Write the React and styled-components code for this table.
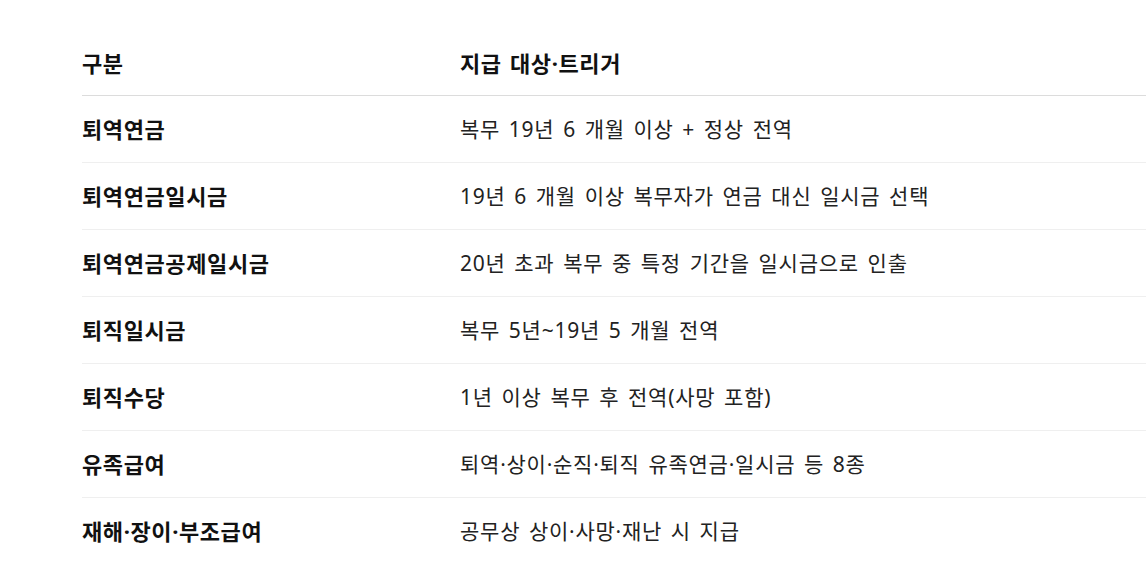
import React from 'react'
import styled, { createGlobalStyle } from 'styled-components'

const GlobalStyle = createGlobalStyle`
  html, body {
    margin: 0;
    padding: 0;
    background: #fff;
    overflow: hidden;
  }

  body {
    font-family: 'Noto Sans', 'Noto Sans CJK KR', sans-serif;
    color: #222;
  }
`

const Wrapper = styled.div`
  padding: 31px 0 0 82px;
`

const Table = styled.table`
  width: 1100px;
  border-collapse: collapse;
  table-layout: fixed;
`

const Th = styled.th`
  text-align: left;
  font-size: 22px;
  line-height: 30px;
  font-weight: 700;
  color: #111;
  letter-spacing: 0.6px;
  word-spacing: 2px;
  padding: 17px 0;
  border-bottom: 1px solid #dcdcdc;
  width: ${props => props.width || 'auto'};
`

const Row = styled.tr`
  border-bottom: 1px solid #efefef;

  &:last-child {
    border-bottom: 0;
  }
`

const Td = styled.td`
  font-size: ${props => (props.strong ? '22px' : '21px')};
  line-height: 30px;
  padding: 18px 0;
  color: ${props => (props.strong ? '#111' : '#222')};
  font-weight: ${props => (props.strong ? 700 : 400)};
  letter-spacing: ${props => (props.strong ? '0.6px' : '0.75px')};
  word-spacing: ${props => (props.strong ? '0' : '2.5px')};
  white-space: nowrap;
`

const rows = [
  ['퇴역연금', '복무 19년 6 개월 이상 + 정상 전역'],
  ['퇴역연금일시금', '19년 6 개월 이상 복무자가 연금 대신 일시금 선택'],
  ['퇴역연금공제일시금', '20년 초과 복무 중 특정 기간을 일시금으로 인출'],
  ['퇴직일시금', '복무 5년~19년 5 개월 전역'],
  ['퇴직수당', '1년 이상 복무 후 전역(사망 포함)'],
  ['유족급여', '퇴역·상이·순직·퇴직 유족연금·일시금 등 8종'],
  ['재해·장이·부조급여', '공무상 상이·사망·재난 시 지급']
]

export default function App () {
  return (
    <Wrapper>
      <GlobalStyle />
      <Table>
        <thead>
          <tr>
            <Th width='378px'>구분</Th>
            <Th>지급 대상·트리거</Th>
          </tr>
        </thead>
        <tbody>
          {rows.map(([name, desc]) => (
            <Row key={name}>
              <Td strong>{name}</Td>
              <Td>{desc}</Td>
            </Row>
          ))}
        </tbody>
      </Table>
    </Wrapper>
  )
}
